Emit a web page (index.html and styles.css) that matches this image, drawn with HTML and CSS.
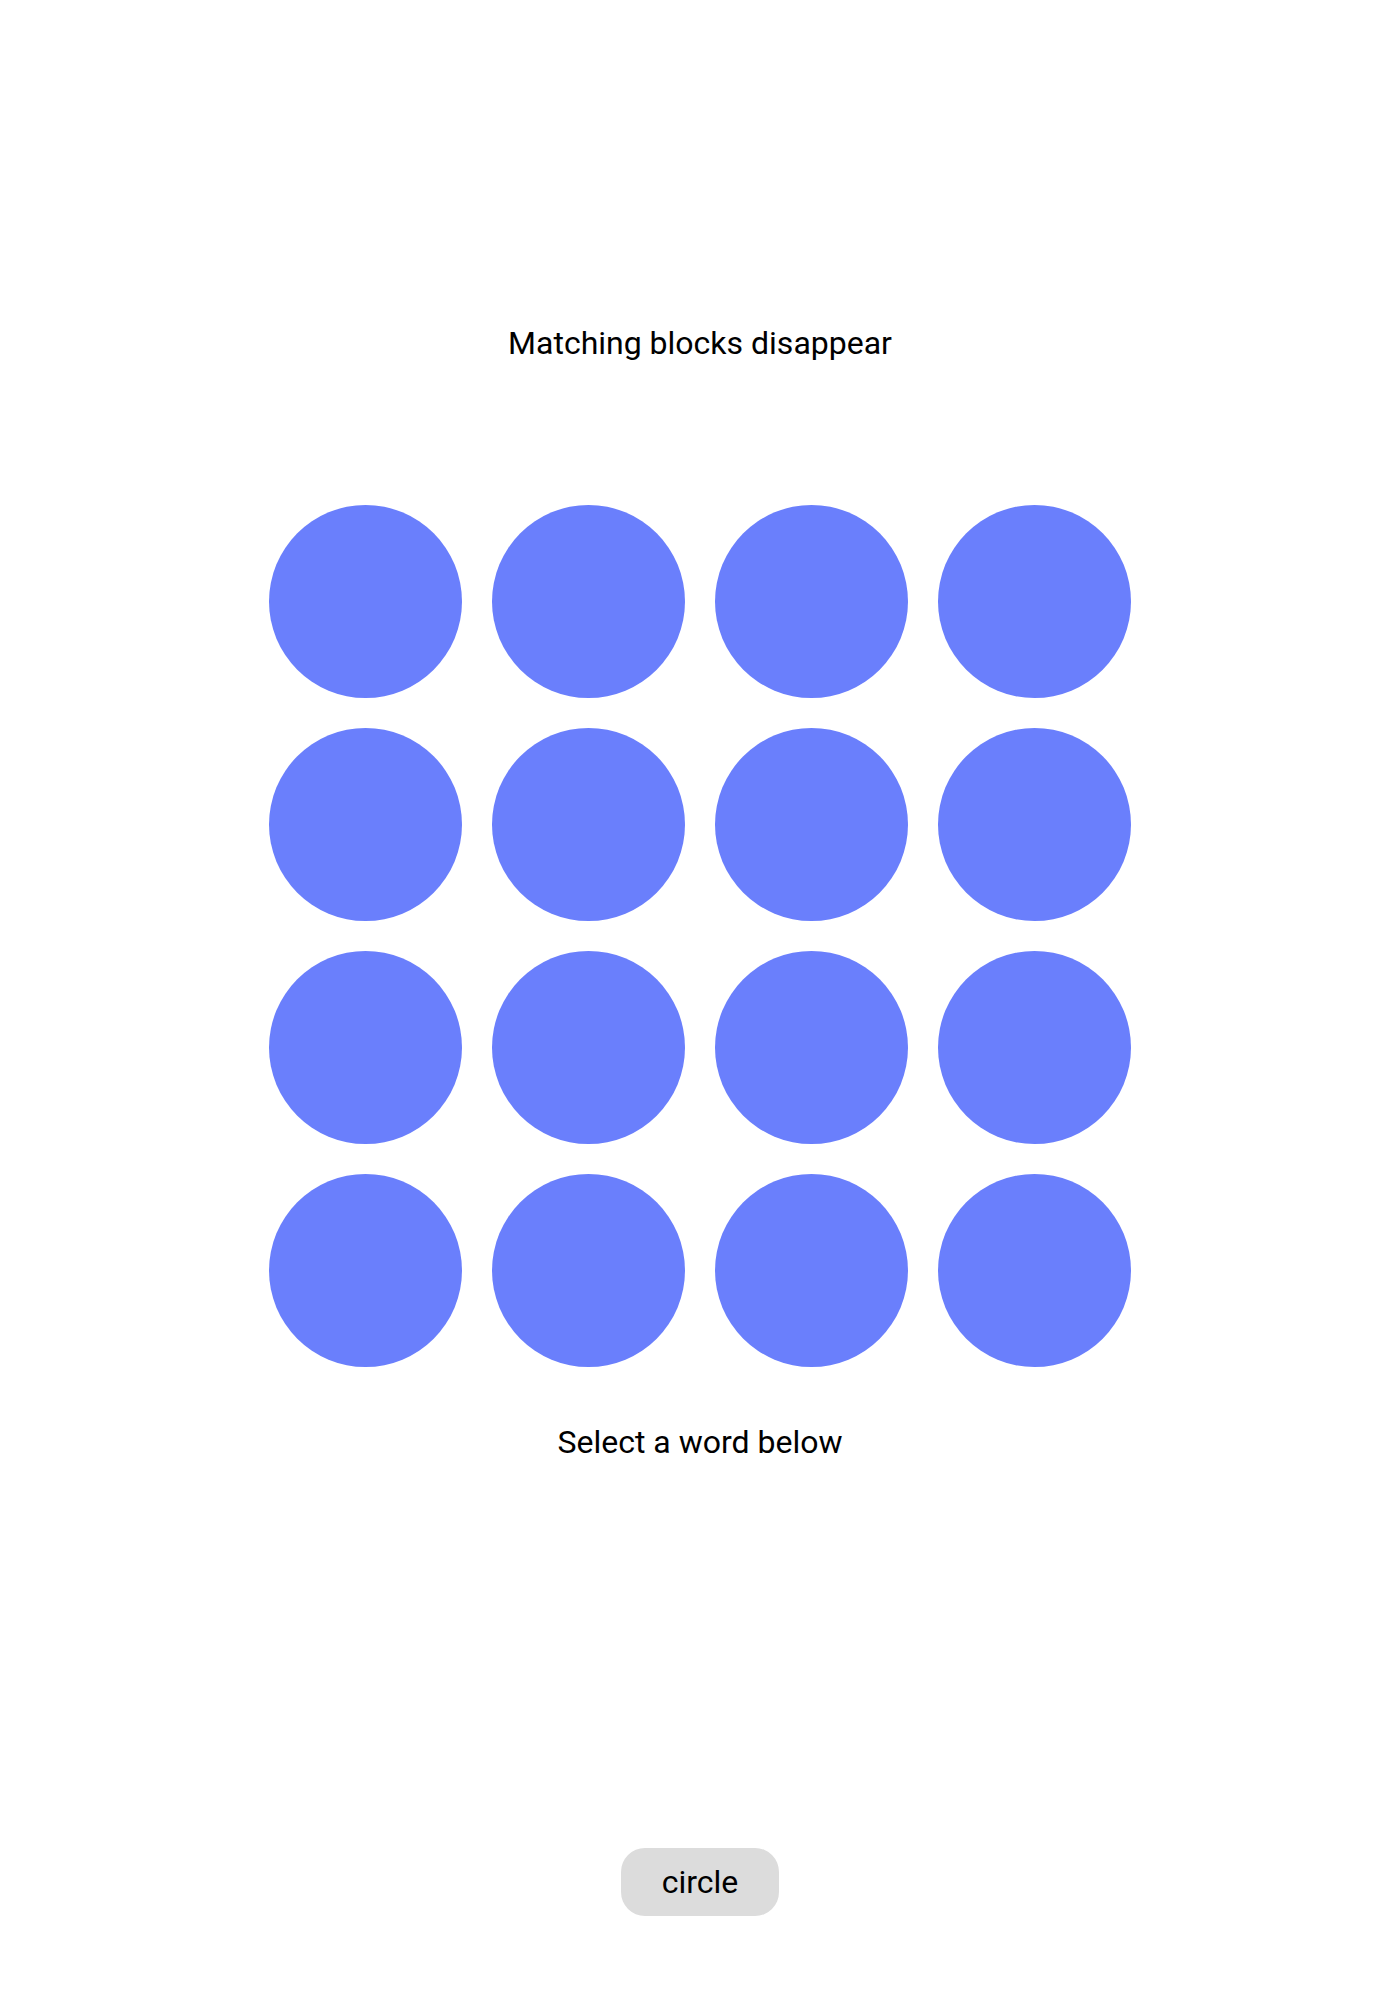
FILE: index.html
```html
<!DOCTYPE html>
<html lang="en">
<head>
<meta charset="utf-8">
<title>Matching blocks</title>
<link rel="stylesheet" href="styles.css">
</head>
<body>
<main class="page">
  <h1 class="prompt">Matching blocks disappear</h1>
  <div class="grid">
    <div class="dot"></div><div class="dot"></div><div class="dot"></div><div class="dot"></div>
    <div class="dot"></div><div class="dot"></div><div class="dot"></div><div class="dot"></div>
    <div class="dot"></div><div class="dot"></div><div class="dot"></div><div class="dot"></div>
    <div class="dot"></div><div class="dot"></div><div class="dot"></div><div class="dot"></div>
  </div>
  <p class="hint">Select a word below</p>
  <div class="choices">
    <button class="choice">circle</button>
  </div>
</main>
</body>
</html>
```
FILE: styles.css
```css
html, body {
  margin: 0;
  padding: 0;
  background: #ffffff;
}
body {
  font-family: Roboto, "Noto Sans", sans-serif;
  color: #000000;
}
.page {
  display: flex;
  flex-direction: column;
  align-items: center;
  width: 1400px;
  height: 2016px;
}
.prompt {
  margin: 324px 0 0;
  font-size: 32px;
  font-weight: 400;
  line-height: 38px;
}
.grid {
  margin-top: 143px;
  display: grid;
  grid-template-columns: repeat(4, 193px);
  grid-auto-rows: 193px;
  gap: 30px;
}
.dot {
  border-radius: 50%;
  background: #6a7ffc;
}
.hint {
  margin: 56px 0 0;
  font-size: 32px;
  line-height: 38px;
}
.choices {
  margin-top: 387px;
  display: flex;
  gap: 16px;
}
.choice {
  width: 158px;
  height: 68px;
  border: none;
  border-radius: 24px;
  background: #dcdcdc;
  font-family: Roboto, "Noto Sans", sans-serif;
  font-size: 32px;
  color: #000000;
  padding: 0;
}
```
